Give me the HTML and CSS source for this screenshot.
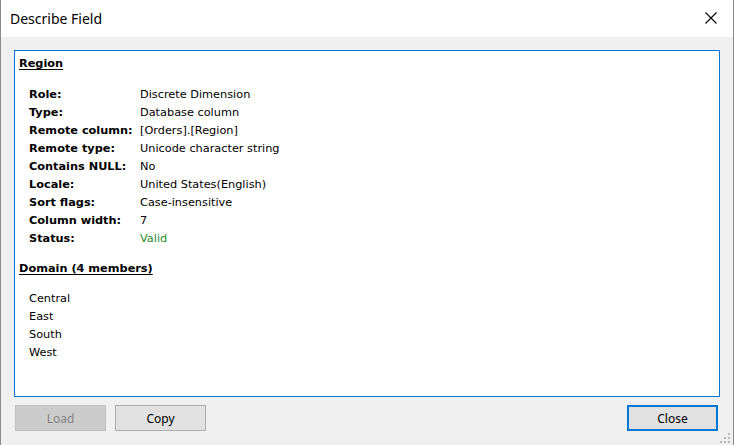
FILE: index.html
```html
<!DOCTYPE html>
<html>
<head>
<meta charset="utf-8">
<link rel="stylesheet" href="styles.css">
</head>
<body>
<div class="window">
  <div class="titlebar">
    <span class="title">Describe Field</span>
    <svg class="close-x" width="12" height="12" viewBox="0 0 12 12"><path d="M0.5 0.5 L11.5 11.5 M11.5 0.5 L0.5 11.5" stroke="#000" stroke-width="1.1" fill="none"/></svg>
  </div>
  <div class="body">
    <div class="panel">
      <div class="heading">Region</div>
      <div class="props">
        <div class="k">Role:</div><div class="v">Discrete Dimension</div>
        <div class="k">Type:</div><div class="v">Database column</div>
        <div class="k">Remote column:</div><div class="v">[Orders].[Region]</div>
        <div class="k">Remote type:</div><div class="v">Unicode character string</div>
        <div class="k">Contains NULL:</div><div class="v">No</div>
        <div class="k">Locale:</div><div class="v">United States(English)</div>
        <div class="k">Sort flags:</div><div class="v">Case-insensitive</div>
        <div class="k">Column width:</div><div class="v">7</div>
        <div class="k">Status:</div><div class="v valid">Valid</div>
      </div>
      <div class="heading heading2">Domain (4 members)</div>
      <ul class="members">
        <li>Central</li>
        <li>East</li>
        <li>South</li>
        <li>West</li>
      </ul>
    </div>
    <div class="buttons">
      <button class="btn disabled">Load</button>
      <button class="btn">Copy</button>
      <span class="spacer"></span>
      <button class="btn default">Close</button>
    </div>
    <svg class="grip" width="10" height="10" viewBox="0 0 10 10">
      <rect x="8" y="0" width="2" height="2" fill="#b8b8b8"/>
      <rect x="4" y="4" width="2" height="2" fill="#b8b8b8"/>
      <rect x="8" y="4" width="2" height="2" fill="#b8b8b8"/>
      <rect x="0" y="8" width="2" height="2" fill="#b8b8b8"/>
      <rect x="4" y="8" width="2" height="2" fill="#b8b8b8"/>
      <rect x="8" y="8" width="2" height="2" fill="#b8b8b8"/>
    </svg>
  </div>
</div>
</body>
</html>
```
FILE: styles.css
```css
html, body {
  margin: 0;
  padding: 0;
  background: #f0f0f0;
}
.window {
  width: 734px;
  height: 445px;
  box-sizing: border-box;
  border-left: 1px solid #8a8a8a;
  border-right: 1px solid #8a8a8a;
  display: flex;
  flex-direction: column;
  background: #f0f0f0;
  overflow: hidden;
}
.titlebar {
  height: 37px;
  flex: none;
  background: #fff;
  display: flex;
  align-items: center;
  padding: 0 16px 0 9px;
}
.title {
  font-family: "Noto Sans", "Open Sans", sans-serif;
  font-size: 14px;
  color: #000;
  flex: 1;
  margin-top: -1px;
}
.close-x {
  display: block;
  margin-top: -1px;
}
.body {
  flex: 1;
  position: relative;
  padding: 13px 13px 0 13px;
  display: flex;
  flex-direction: column;
}
.panel {
  height: 347px;
  box-sizing: border-box;
  border: 1px solid #0078d7;
  background: #fff;
  padding: 5px 4px;
  font-family: Tahoma, "DejaVu Sans", sans-serif;
  font-size: 11.3px;
  color: #000;
}
.heading {
  font-weight: bold;
  text-decoration: underline;
  text-underline-offset: 2px;
  line-height: 16px;
}
.props {
  display: grid;
  grid-template-columns: 111px 1fr;
  margin: 14px 0 0 10px;
  line-height: 18px;
}
.k {
  font-weight: bold;
  white-space: nowrap;
}
.valid {
  color: #1f8a1f;
}
.heading2 {
  margin-top: 13px;
}
.members {
  list-style: none;
  margin: 13px 0 0 10px;
  padding: 0;
  line-height: 18px;
}
.buttons {
  display: flex;
  gap: 9px;
  margin-top: 8px;
  padding: 0 2px 0 1px;
}
.spacer {
  flex: 1;
}
.btn {
  width: 91px;
  height: 26px;
  box-sizing: border-box;
  border: 1px solid #adadad;
  background: #e1e1e1;
  font-family: "Noto Sans", "Open Sans", sans-serif;
  font-size: 12px;
  color: #000;
  padding: 0;
  margin: 0;
}
.btn.disabled {
  background: #cccccc;
  border-color: #bfbfbf;
  color: #838383;
}
.btn.default {
  border: 2px solid #0078d7;
}
.grip {
  position: absolute;
  right: 3px;
  bottom: 2px;
}
```
